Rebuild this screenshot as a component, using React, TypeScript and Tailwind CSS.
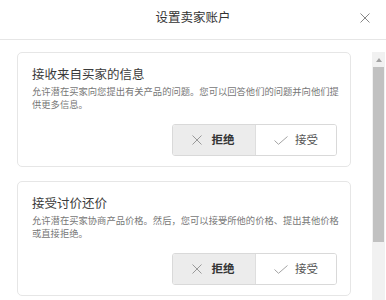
const cards = [
  {
    title: "接收来自买家的信息",
    lines: ["允许潜在买家向您提出有关产品的问题。您可以回答他们的问题并向他们提", "供更多信息。"],
  },
  {
    title: "接受讨价还价",
    lines: ["允许潜在买家协商产品价格。然后，您可以接受所他的价格、提出其他价格", "或直接拒绝。"],
  },
];

function XIcon({ size, className }: { size: number; className?: string }) {
  return (
    <svg width={size} height={size} viewBox="0 0 10 10" className={className}>
      <path d="M0.5 0.5L9.5 9.5M9.5 0.5L0.5 9.5" stroke="currentColor" strokeWidth="1" fill="none" />
    </svg>
  );
}

function CheckIcon() {
  return (
    <svg width="14" height="9" viewBox="0 0 14 9" className="text-[#a3a3a3]">
      <path d="M0.5 4.5L4.5 8.3L13.5 0.5" stroke="currentColor" strokeWidth="1" fill="none" />
    </svg>
  );
}

function Card({ title, lines }: { title: string; lines: string[] }) {
  return (
    <div className="rounded-[5px] border border-[#e6e6e6] bg-white pl-[14px] pr-[13px] pt-[12px] pb-[10px]">
      <div className="text-[12.5px] leading-[17px] text-[#3a3a3a]">{title}</div>
      <div className="mt-[3px] text-[9.3px] leading-[12.5px] text-[#777] whitespace-nowrap">
        {lines.map((l) => (
          <div key={l}>{l}</div>
        ))}
      </div>
      <div className="mt-[14px] flex justify-end">
        <div className="flex h-[32px] w-[165px] overflow-hidden rounded-[3px] border border-[#d9d9d9]">
          <div className="flex flex-1 items-center justify-center gap-[10px] border-r border-[#dedede] bg-[#ececec] pr-[2px]">
            <XIcon size={10} className="text-[#999]" />
            <span className="text-[11.5px] font-bold text-[#333]">拒绝</span>
          </div>
          <div className="flex flex-1 items-center justify-center gap-[7px] bg-white">
            <CheckIcon />
            <span className="text-[11.5px] text-[#555]">接受</span>
          </div>
        </div>
      </div>
    </div>
  );
}

export default function App() {
  return (
    <div className="h-[300px] w-[386px] overflow-hidden bg-white font-['Noto_Sans_CJK_SC',sans-serif]">
      <div className="relative flex h-[40px] items-center justify-center border-b border-[#e6e6e6]">
        <span className="pb-[4px] text-[12.5px] text-[#333]">设置卖家账户</span>
        <XIcon size={10} className="absolute right-[16px] top-[13px] text-[#888]" />
      </div>
      <div className="flex">
        <div className="flex w-[372px] flex-col gap-[14px] pl-[17px] pr-[21px] pt-[12px]">
          {cards.map((c) => (
            <Card key={c.title} title={c.title} lines={c.lines} />
          ))}
        </div>
        <div className="mt-[12px] flex h-[260px] w-[13px] flex-col bg-[#f1f1f1]">
          <div className="flex h-[15px] items-center justify-center">
            <div className="h-0 w-0 border-x-[3.5px] border-b-[4px] border-x-transparent border-b-[#a3a3a3]" />
          </div>
          <div className="mx-[1px] h-[175px] bg-[#c1c1c1]" />
        </div>
      </div>
    </div>
  );
}
